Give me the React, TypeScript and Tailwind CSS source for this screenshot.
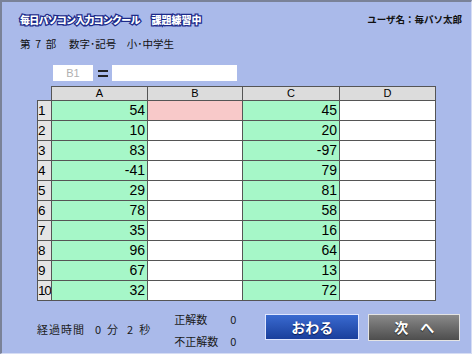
import React from "react";

const rows: [number, number][] = [
  [54, 45],
  [10, 20],
  [83, -97],
  [-41, 79],
  [29, 81],
  [78, 58],
  [35, 16],
  [96, 64],
  [67, 13],
  [32, 72],
];

const jp = "font-['Noto_Sans_CJK_JP',sans-serif]";
const ar = "font-['Liberation_Sans',Arial,sans-serif]";

export default function App() {
  return (
    <div className="w-[472px] h-[354px] bg-[#aabaea] border-t-2 border-l-2 border-[#7a8298] border-r border-r-[#d6ddf4] border-b border-b-[#d6ddf4] flex flex-col overflow-hidden">
      <div className="flex justify-between items-center pt-[9px] pl-[18px] pr-[9px] h-[26px]">
        <div
          className={`${jp} text-[10px] font-black text-white tracking-[-0.8px] [-webkit-text-stroke:2.5px_#1c2a8a] [paint-order:stroke_fill]`}
        >
          毎日パソコン入力コンクール<span className="ml-[12px] tracking-[0px]">課題練習中</span>
        </div>
        <div className={`${jp} text-[9.5px] font-bold text-[#111]`}>ユーザ名：毎パソ太郎</div>
      </div>
      <div className={`${jp} text-[10.5px] text-[#111] pl-[18px] mt-[9px] leading-[14px] whitespace-pre`}>
        {"第  7  部　 数字･記号　小･中学生"}
      </div>
      <div className="flex items-center pl-[51px] mt-[14px] h-[16px]">
        <div className={`${ar} w-[40px] h-[16px] bg-white text-[#b0b0b0] text-[11px] leading-[16px] text-center`}>
          B1
        </div>
        <div className="w-[19px] flex justify-center">
          <div className="w-[10px] h-[7px] border-t-[2.5px] border-b-[2.5px] border-[#222]" />
        </div>
        <div className="w-[125px] h-[16px] bg-white" />
      </div>
      <div className={`${ar} ml-[35px] mt-[5px] grid grid-cols-[15px_96px_95px_97px_96px] auto-rows-[20px] grid-rows-[15px] text-[14px] text-black`}>
        <div className="border-r border-b border-[#555]" />
        {["A", "B", "C", "D"].map((h) => (
          <div
            key={h}
            className="bg-[#dcdcdc] border-t border-r border-b border-[#555] text-[11px] leading-[13px] text-center"
          >
            {h}
          </div>
        ))}
        {rows.map(([a, c], i) => (
          <React.Fragment key={i}>
            <div className="bg-[#e4e4e4] border-l border-r border-b border-[#555] leading-[19px] text-[13.5px] pl-0 tracking-[-1.2px] overflow-hidden whitespace-nowrap">
              {i + 1}
            </div>
            <div className="bg-[#a6f7c8] border-r border-b border-[#555] leading-[19px] text-right pr-[2px]">{a}</div>
            <div className={`${i === 0 ? "bg-[#f8c9c9]" : "bg-white"} border-r border-b border-[#555]`} />
            <div className="bg-[#a6f7c8] border-r border-b border-[#555] leading-[19px] text-right pr-[2px]">{c}</div>
            <div className="bg-white border-r border-b border-[#555]" />
          </React.Fragment>
        ))}
      </div>
      <div className={`${jp} flex items-start mt-[9px] text-[11px] text-[#1a1a1a]`}>
        <div className="ml-[35px] mt-[11px] flex whitespace-nowrap">
          <span className="tracking-[1px]">経過時間</span>
          <span className="ml-[10px]">0</span>
          <span className="ml-[6px]">分</span>
          <span className="ml-[9px]">2</span>
          <span className="ml-[6px]">秒</span>
        </div>
        <div className="ml-[24px] flex flex-col gap-[5px] mt-[1px]">
          <div className="flex">
            <span className="w-[56px]">正解数</span>
            <span>0</span>
          </div>
          <div className="flex">
            <span className="w-[56px]">不正解数</span>
            <span>0</span>
          </div>
        </div>
        <div className="ml-[29px] mt-[4px] w-[94px] h-[26px] border border-[#dfe6ff] bg-gradient-to-b from-[#3a6ad0] to-[#1a3f9c] flex items-center justify-center text-white text-[14px] font-bold [text-shadow:0_1px_1px_#0a1a50]">
          おわる
        </div>
        <div className="ml-[9px] mt-[4px] w-[92px] h-[27px] border border-[#e4e4e4] bg-gradient-to-b from-[#8a8a8a] to-[#4e4e4e] flex items-center justify-center gap-[12px] text-white text-[14px] font-bold [text-shadow:0_1px_1px_#222]">
          <span>次</span>
          <span>へ</span>
        </div>
      </div>
    </div>
  );
}
